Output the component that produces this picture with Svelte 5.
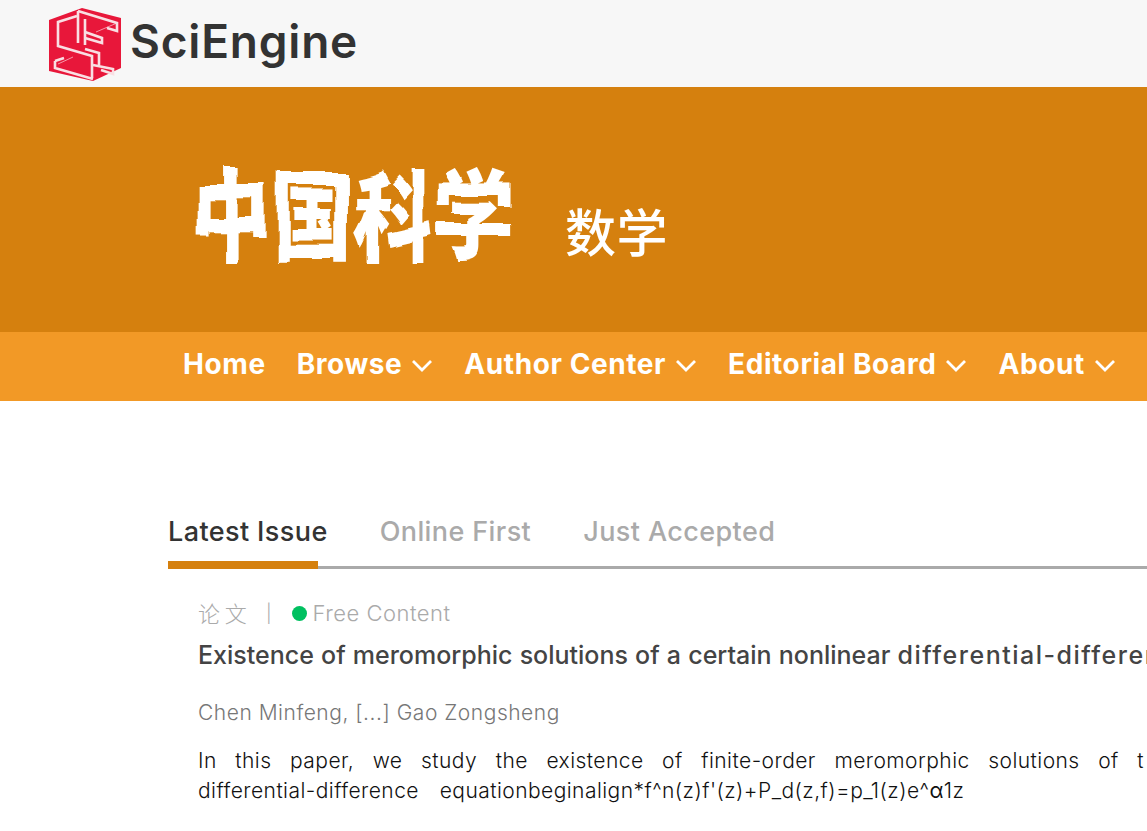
<script lang="ts">
  const navItems = [
    { label: 'Home', caret: false },
    { label: 'Browse', caret: true },
    { label: 'Author Center', caret: true },
    { label: 'Editorial Board', caret: true },
    { label: 'About', caret: true }
  ];
  const tabs = ['Latest Issue', 'Online First', 'Just Accepted'];
</script>

<!-- rough edges for the brush-written journal name -->
<svg class="defs" aria-hidden="true">
  <filter id="brush" x="-5%" y="-5%" width="110%" height="110%">
    <feTurbulence type="fractalNoise" baseFrequency="0.022" numOctaves="1" seed="7" />
    <feDisplacementMap in="SourceGraphic" scale="14" />
  </filter>
</svg>

<header class="topbar">
  <svg class="mark" viewBox="0 0 72 75" aria-hidden="true">
    <polygon points="0,13 33,1 72,11 72,61 44,74 0,64" fill="#e8173a" />
    <g fill="none" stroke="#fff" stroke-opacity="0.55" stroke-width="1">
      <path d="M47,25 L68,16" />
      <path d="M9,57 L24,50" />
    </g>
    <g fill="none" stroke="#f9dfe3" stroke-width="2.6">
      <path d="M29,4 L68,16 V24 L58,21" />
      <path d="M29,4 V36" />
      <path d="M36,12 V38" />
      <path d="M28,9 L9,15 V39 L43,49 V71" />
      <path d="M36,25 L53,31 V36 L36,31" />
      <path d="M6,54 V61 L44,72" />
      <path d="M6,54 L15,51" />
      <path d="M44,58 L64,62 V67 L52,63" />
      <path d="M36,42 L50,46 V58" />
    </g>
  </svg>
  <span class="brand">SciEngine</span>
</header>

<section class="masthead">
  <span class="journal">中国科学</span>
  <span class="subject">数学</span>
</section>

<nav class="mainnav">
  {#each navItems as item}
    <a href="#top" class="navlink">
      {item.label}
      {#if item.caret}
        <svg class="caret" viewBox="0 0 22 14" aria-hidden="true">
          <path d="M2,2 L11,11 L20,2" fill="none" stroke="#fff" stroke-width="2.8" />
        </svg>
      {/if}
    </a>
  {/each}
</nav>

<main class="content">
  <div class="tabs">
    {#each tabs as tab, index}
      <span class="tab" class:active={index === 0}>{tab}</span>
    {/each}
  </div>

  <article class="paper">
    <div class="meta">
      <span class="kind">论 文</span>
      <span class="sep">|</span>
      <span class="dot"></span>
      <span class="free">Free Content</span>
    </div>
    <h3 class="title">Existence of meromorphic solutions of a certain nonlinear <span class="long">differential-difference</span></h3>
    <p class="authors">Chen Minfeng, [...] Gao Zongsheng</p>
    <p class="abstract">
      <span class="line1">In this paper, we study the existence of finite-order meromorphic solutions of t</span>
      <span class="line2">differential-difference&nbsp; equationbeginalign*f^n(z)f'(z)+P_d(z,f)=p_1(z)e^<b>α</b>1z</span>
    </p>
  </article>
</main>

<style>
  :global(body) {
    background: #fff;
    overflow: hidden;
  }

  .defs {
    position: absolute;
    width: 0;
    height: 0;
  }

  .topbar {
    height: 87px;
    background: #f7f7f7;
    display: flex;
    align-items: center;
    padding-left: 49px;
    gap: 9px;
    box-sizing: border-box;
  }

  .mark {
    width: 72px;
    height: 75px;
    margin-top: 1px;
  }

  .brand {
    font-family: Inter, sans-serif;
    font-size: 46px;
    font-weight: 600;
    color: #333;
    letter-spacing: 0.8px;
    margin-top: -6px;
  }

  .masthead {
    height: 245px;
    background: #d5800e;
    display: flex;
    align-items: center;
    padding-left: 191px;
    box-sizing: border-box;
    color: #fff;
    font-family: "Noto Sans CJK SC", sans-serif;
  }

  .journal {
    display: inline-block;
    font-size: 81px;
    font-weight: 900;
    line-height: 1;
    transform: scaleY(1.22);
    filter: url(#brush);
  }

  .subject {
    font-size: 51px;
    font-weight: 500;
    letter-spacing: 0.5px;
    margin: 42px 0 0 50px;
    line-height: 1;
  }

  .mainnav {
    height: 69px;
    background: #f29926;
    display: flex;
    align-items: center;
    padding-left: 183px;
    gap: 31px;
  }

  .navlink {
    display: flex;
    align-items: center;
    gap: 9px;
    font-family: Inter, sans-serif;
    font-size: 28px;
    font-weight: 700;
    letter-spacing: 0.58px;
    color: #fff;
    text-decoration: none;
    white-space: nowrap;
    margin-top: -6px;
  }

  .caret {
    width: 22px;
    height: 14px;
    margin-top: 4px;
  }

  .content {
    padding: 110px 0 0 168px;
    font-family: Inter, sans-serif;
  }

  .tabs {
    display: flex;
    gap: 52px;
    height: 55px;
    border-bottom: 3px solid #aaa;
  }

  .tab {
    position: relative;
    font-size: 27px;
    font-weight: 500;
    letter-spacing: 0.4px;
    color: #aaa;
    line-height: 42px;
    white-space: nowrap;
  }

  .tab.active {
    color: #333;
  }

  .tab.active::after {
    content: "";
    position: absolute;
    left: 0;
    bottom: -3px;
    width: 150px;
    height: 8px;
    background: #d5800e;
  }

  .paper {
    padding: 29px 0 0 30px;
    white-space: nowrap;
  }

  .meta {
    display: flex;
    align-items: center;
    height: 30px;
    font-size: 22px;
    font-weight: 300;
    color: #aaa;
  }

  .kind {
    font-family: "Noto Sans CJK SC", sans-serif;
    margin-top: -3px;
  }

  .sep {
    font-size: 18px;
    margin: 0 20px 0 19px;
  }

  .dot {
    width: 15px;
    height: 15px;
    border-radius: 50%;
    background: #00c060;
    margin-right: 6px;
  }

  .free {
    letter-spacing: 0.5px;
  }

  .title {
    margin: 12px 0 0;
    font-size: 25px;
    font-weight: 500;
    word-spacing: 0.5px;
    color: #444;
    line-height: 30px;
  }

  .long {
    letter-spacing: 1.5px;
  }

  .authors {
    margin: 28px 0 0;
    font-size: 21px;
    font-weight: 300;
    letter-spacing: 0.52px;
    color: #777;
    line-height: 30px;
  }

  .abstract {
    margin: 18px 0 0;
    font-size: 21px;
    font-weight: 300;
    letter-spacing: 0.45px;
    color: #111;
    line-height: 30px;
  }

  .line1, .line2 {
    display: block;
  }

  .line1 {
    word-spacing: 12.2px;
  }

  .line2 {
    word-spacing: 4px;
  }
</style>
